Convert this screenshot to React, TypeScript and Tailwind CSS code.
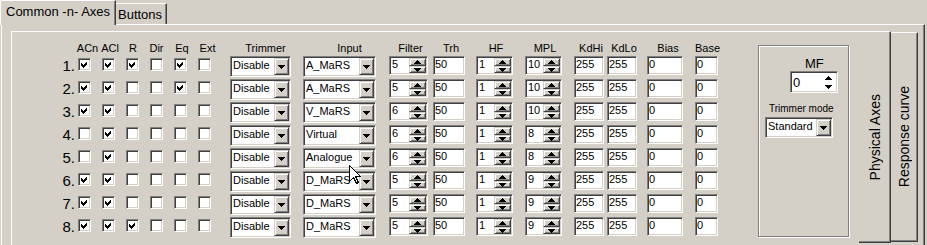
import React from "react";

// classic 3D bevels
const sunken =
  "border border-t-[#808080] border-l-[#808080] border-b-white border-r-white shadow-[inset_1px_1px_0_#404040,inset_-1px_-1px_0_#d4d0c8]";
const raised =
  "border border-t-[#d4d0c8] border-l-[#d4d0c8] border-b-[#404040] border-r-[#404040] shadow-[inset_1px_1px_0_#fff,inset_-1px_-1px_0_#808080]";

interface AxisRow {
  n: number;
  cb: number[];
  input: string;
  filter: number;
  mpl: number;
}

const rows: AxisRow[] = [
  { n: 1, cb: [1, 1, 1, 0, 1, 0], input: "A_MaRS", filter: 5, mpl: 10 },
  { n: 2, cb: [1, 1, 0, 0, 1, 0], input: "A_MaRS", filter: 5, mpl: 10 },
  { n: 3, cb: [1, 1, 0, 0, 0, 0], input: "V_MaRS", filter: 6, mpl: 10 },
  { n: 4, cb: [0, 1, 0, 0, 0, 0], input: "Virtual", filter: 6, mpl: 8 },
  { n: 5, cb: [0, 1, 0, 0, 0, 0], input: "Analogue", filter: 6, mpl: 8 },
  { n: 6, cb: [1, 1, 0, 0, 0, 0], input: "D_MaRS", filter: 5, mpl: 9 },
  { n: 7, cb: [1, 1, 0, 0, 0, 0], input: "D_MaRS", filter: 5, mpl: 9 },
  { n: 8, cb: [1, 1, 1, 0, 0, 0], input: "D_MaRS", filter: 5, mpl: 9 },
];

// checkbox columns: margin + header nudge
const cbCols = [
  { label: "ACn", ml: "ml-[3px]", hp: "pl-[6px]" },
  { label: "ACl", ml: "ml-[11px]", hp: "pl-[3px]" },
  { label: "R", ml: "ml-[11px]", hp: "pl-[1px]" },
  { label: "Dir", ml: "ml-[11px]", hp: "" },
  { label: "Eq", ml: "ml-[11px]", hp: "pl-[3px]" },
  { label: "Ext", ml: "ml-[11px]", hp: "pl-[6px]" },
];

const ArrowDown = () => (
  <svg width="7" height="4" viewBox="0 0 7 4" shapeRendering="crispEdges">
    <path d="M0 0H7L3.5 4Z" fill="#000" />
  </svg>
);
const ArrowUp = () => (
  <svg width="7" height="4" viewBox="0 0 7 4" shapeRendering="crispEdges">
    <path d="M3.5 0L7 4H0Z" fill="#000" />
  </svg>
);

function Check({ on, ml }: { on: boolean; ml: string }) {
  return (
    <div className={`${ml} mt-[2px] w-[13px] h-[13px] bg-white ${sunken} flex items-center justify-center`}>
      {on && (
        <svg width="7" height="7" viewBox="0 0 7 7" shapeRendering="crispEdges">
          <path d="M0 2L2 4L6 0V3L2 7L0 5Z" fill="#000" />
        </svg>
      )}
    </div>
  );
}

function Combo({ value, cls }: { value: string; cls: string }) {
  return (
    <div className={`${cls} h-[21px] bg-white ${sunken} flex p-px`}>
      <div className="flex-1 pl-[1px] text-[11px] leading-[15px] whitespace-nowrap overflow-hidden">{value}</div>
      <div className={`w-[15px] h-[17px] bg-[#d4d0c8] ${raised} flex items-center justify-center`}>
        <ArrowDown />
      </div>
    </div>
  );
}

function Spin({ value, cls }: { value: string | number; cls: string }) {
  return (
    <div className={`${cls} h-[19px] bg-white ${sunken} flex p-px`}>
      <div className="flex-1 pl-px text-[11px] leading-[13px]">{value}</div>
      <div className="w-[17px] flex flex-col">
        <div className={`h-[8px] bg-[#d4d0c8] ${raised} flex items-center justify-center`}>
          <ArrowUp />
        </div>
        <div className={`h-[7px] bg-[#d4d0c8] ${raised} flex items-center justify-center`}>
          <ArrowDown />
        </div>
      </div>
    </div>
  );
}

function Edit({ value, cls }: { value: string | number; cls: string }) {
  return <div className={`${cls} h-[19px] bg-white ${sunken} p-px text-[11px] leading-[13px]`}>{value}</div>;
}

function Header({ label, cls }: { label: string; cls: string }) {
  return <div className={`${cls} flex justify-center whitespace-nowrap`}>{label}</div>;
}

export default function App() {
  return (
    <div className="relative w-[927px] h-[245px] overflow-hidden bg-[#d4d0c8] font-['Liberation_Sans',Arial,sans-serif] text-black flex flex-col">
      {/* tabs */}
      <div className="flex items-end h-[24px] shrink-0">
        <div className="relative z-10 -mb-px h-[25px] w-[116px] bg-[#d4d0c8] border-l border-t border-white border-r border-r-[#404040] rounded-tl-[2px] shadow-[inset_-1px_0_0_#808080] pl-[5px] pt-[3px] text-[13px] leading-[15px] whitespace-nowrap">
          Common -n- Axes
        </div>
        <div className="h-[21px] w-[51px] border-t border-white border-r border-r-[#404040] shadow-[inset_-1px_0_0_#808080] pl-[2px] pt-[3px] text-[13px] leading-[15px]">
          Buttons
        </div>
      </div>

      {/* tab page */}
      <div className="ml-[1px] w-[924px] flex-1 border-l border-t border-white border-r border-r-[#404040] shadow-[inset_-1px_0_0_#808080] pl-[9px] pt-[6px] flex items-start">
        {/* Physical Axes page */}
        <div className="w-[848px] h-[240px] border-l border-t border-white flex items-start">
          <div className="flex flex-col pt-[8px] text-[11px]">
            {/* header */}
            <div className="flex h-[16px] leading-[16px]">
              <div className="w-[63px]" />
              {cbCols.map((c) => (
                <Header key={c.label} label={c.label} cls={`${c.ml} w-[13px] ${c.hp}`} />
              ))}
              <Header label="Trimmer" cls="ml-[19px] w-[61px] pl-[10px]" />
              <Header label="Input" cls="ml-[12px] w-[73px] pl-[20px]" />
              <Header label="Filter" cls="ml-[13px] w-[39px] pl-[4px]" />
              <Header label="Trh" cls="ml-[5px] w-[32px] pl-[4px]" />
              <Header label="HF" cls="ml-[11px] w-[37px] pl-[3px]" />
              <Header label="MPL" cls="ml-[12px] w-[37px] pl-[3px]" />
              <Header label="KdHi" cls="ml-[12px] w-[30px] pl-[4px]" />
              <Header label="KdLo" cls="ml-[3px] w-[30px] pl-[4px]" />
              <Header label="Bias" cls="ml-[10px] w-[36px] pl-[6px]" />
              <Header label="Base" cls="ml-[12px] w-[23px] pl-[2px]" />
            </div>

            {rows.map((r) => (
              <div key={r.n} className="flex items-start h-[23px]">
                <div className="w-[63px] text-right text-[15px] leading-[20px]">{r.n}.</div>
                {cbCols.map((c, i) => (
                  <Check key={c.label} on={r.cb[i] === 1} ml={c.ml} />
                ))}
                <Combo value="Disable" cls="ml-[19px] w-[61px]" />
                <Combo value={r.input} cls="ml-[12px] w-[73px]" />
                <Spin value={r.filter} cls="ml-[13px] w-[39px]" />
                <Edit value={50} cls="ml-[5px] w-[32px]" />
                <Spin value={1} cls="ml-[11px] w-[37px]" />
                <Spin value={r.mpl} cls="ml-[12px] w-[37px]" />
                <Edit value={255} cls="ml-[12px] w-[30px]" />
                <Edit value={255} cls="ml-[3px] w-[30px]" />
                <Edit value={0} cls="ml-[10px] w-[36px]" />
                <Edit value={0} cls="ml-[12px] w-[23px]" />
              </div>
            ))}
          </div>

          {/* MF group */}
          <div className="ml-[40px] mt-[13px] w-[91px] h-[192px] border border-[#808080] shadow-[inset_1px_1px_0_#fff,1px_1px_0_#fff] flex flex-col items-start">
            <div className="ml-[46px] mt-[11px] text-[13px] leading-[14px]">MF</div>
            <div className={`ml-[31px] w-[48px] h-[22px] bg-white ${sunken} flex items-center`}>
              <div className="flex-1 pl-[2px] text-[13px] leading-[15px]">0</div>
              <div className="flex flex-col gap-[5px] pr-[5px]">
                <ArrowUp />
                <ArrowDown />
              </div>
            </div>
            <div className="ml-[10px] mt-[10px] text-[10px] leading-[12px] whitespace-nowrap">Trimmer mode</div>
            <Combo value="Standard" cls="ml-[6px] mt-[2px] w-[68px]" />
          </div>
        </div>

        {/* vertical tabs */}
        <div className="w-[32px] h-[212px] border-t border-white border-r border-b border-r-[#404040] border-b-[#404040] shadow-[inset_-1px_-1px_0_#808080] flex items-center justify-center">
          <span className="[writing-mode:vertical-rl] rotate-180 text-[14px] leading-[16px] whitespace-nowrap">
            Physical Axes
          </span>
        </div>
        <div className="mt-[1px] w-[27px] h-[210px] border-t border-white border-r border-b border-r-[#404040] border-b-[#404040] shadow-[inset_-1px_-1px_0_#808080] flex items-center justify-center">
          <span className="[writing-mode:vertical-rl] rotate-180 text-[14px] leading-[16px] whitespace-nowrap">
            Response curve
          </span>
        </div>
      </div>

      {/* mouse pointer */}
      <svg
        className="absolute left-[349px] top-[165px]"
        width="13"
        height="20"
        viewBox="0 0 13 20"
        shapeRendering="crispEdges"
      >
        <path d="M0.5 0.5V16.5L4.5 12.5L7.5 18.5L9.5 17.5L6.5 11.5H11.5Z" fill="#fff" stroke="#000" />
      </svg>
    </div>
  );
}
